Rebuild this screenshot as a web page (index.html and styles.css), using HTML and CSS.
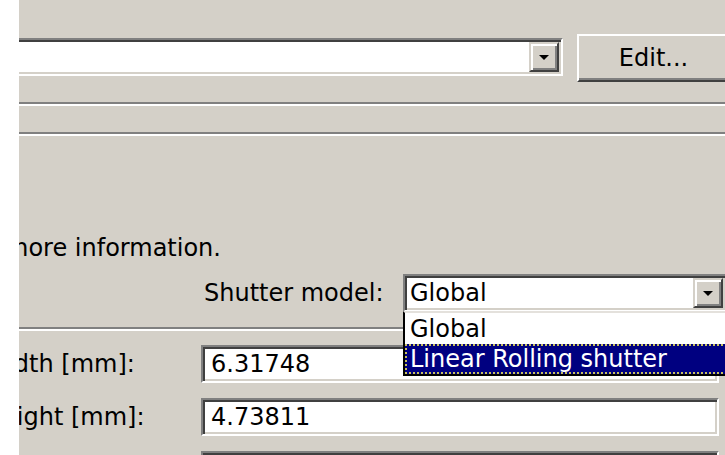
FILE: index.html
```html
<!DOCTYPE html>
<html lang="en">
<head>
<meta charset="utf-8">
<title>Camera settings</title>
<link rel="stylesheet" href="styles.css">
</head>
<body>
<div class="edge"></div>
<main class="dialog">
  <div class="content">
    <div class="top-row">
      <div class="combo combo-wide">
        <span class="value"></span>
        <span class="drop-btn"><svg width="10" height="6" viewBox="0 0 10 6"><path d="M0 0H10L5 5Z"/></svg></span>
      </div>
      <button class="push" type="button">Edit...</button>
    </div>
    <div class="groove groove-a"></div>
    <div class="groove groove-b"></div>
    <p class="note">more information.</p>
    <div class="shutter-row">
      <span class="shutter-label">Shutter model:</span>
      <div class="combo combo-shutter">
        <span class="value">Global</span>
        <span class="drop-btn"><svg width="10" height="6" viewBox="0 0 10 6"><path d="M0 0H10L5 5Z"/></svg></span>
      </div>
    </div>
    <div class="groove groove-c"></div>
    <div class="field-row first">
      <span class="label">Width [mm]:</span>
      <div class="textbox">6.31748</div>
    </div>
    <div class="field-row">
      <span class="label">Height [mm]:</span>
      <div class="textbox">4.73811</div>
    </div>
    <div class="field-row">
      <span class="label">Focal length [mm]:</span>
      <div class="textbox"></div>
    </div>
  </div>
  <ul class="dropdown">
    <li class="item">Global</li>
    <li class="item selected">Linear Rolling shutter</li>
  </ul>
</main>
</body>
</html>
```
FILE: styles.css
```css
html, body {
  margin: 0;
  padding: 0;
}

body {
  display: flex;
  height: 455px;
  overflow: hidden;
  font-family: "DejaVu Sans", sans-serif;
  font-size: 24px;
  color: #000;
  background: #fff;
}

.edge {
  flex: none;
  width: 19px;
  background: #fff;
}

.dialog {
  flex: 1;
  position: relative;
  overflow: hidden;
  background: #d4d0c8;
}

.content {
  margin-left: -35px;
  padding-top: 34px;
}

/* ---- combo box ---- */
.combo {
  box-sizing: border-box;
  display: flex;
  align-items: center;
  height: 38px;
  padding: 2px;
  background: #fff;
  border: 2px solid;
  border-color: #808080 #fff #fff #808080;
  box-shadow: inset 2px 2px 0 #404040, inset -2px -2px 0 #d4d0c8;
}

.combo .value {
  flex: 1;
  padding-left: 3px;
  line-height: 28px;
  white-space: nowrap;
}

.drop-btn {
  box-sizing: border-box;
  flex: none;
  display: flex;
  align-items: center;
  justify-content: center;
  width: 30px;
  height: 30px;
  padding-top: 2px;
  background: #d4d0c8;
  border: 2px solid;
  border-color: #d4d0c8 #404040 #404040 #d4d0c8;
  box-shadow: inset 2px 2px 0 #fff, inset -2px -2px 0 #808080;
}

.drop-btn svg {
  display: block;
  fill: #000;
}

.top-row {
  display: flex;
  align-items: flex-start;
}

.combo-wide {
  flex: none;
  width: 579px;
  margin-top: 4px;
}

.push {
  box-sizing: border-box;
  flex: none;
  width: 153px;
  height: 48px;
  margin-left: 14px;
  padding: 0;
  font: inherit;
  color: #000;
  background: #d4d0c8;
  border: 2px solid;
  border-color: #fff #404040 #404040 #fff;
  box-shadow: inset -2px -2px 0 #808080;
}

/* ---- etched separators ---- */
.groove {
  height: 2px;
  background: #808080;
  border-bottom: 2px solid #fff;
}

.groove-a { margin-top: 20px; }
.groove-b { margin-top: 26px; }
.groove-c { margin-top: 15px; }

.note {
  margin: 98px 0 0 21px;
  line-height: 28px;
  white-space: nowrap;
}

.shutter-row {
  display: flex;
  align-items: center;
  margin-top: 12px;
  padding-left: 220px;
}

.shutter-label {
  flex: none;
  width: 199px;
  line-height: 28px;
  white-space: nowrap;
}

.combo-shutter {
  flex: none;
  width: 324px;
}

/* ---- labelled text fields ---- */
.field-row {
  display: flex;
  align-items: center;
  margin-top: 15px;
}

.field-row.first {
  margin-top: 14px;
}

.label {
  flex: none;
  width: 217px;
  line-height: 28px;
  white-space: nowrap;
}

.textbox {
  box-sizing: border-box;
  flex: none;
  width: 518px;
  height: 38px;
  padding: 3px 6px 0 8px;
  line-height: 28px;
  background: #fff;
  border: 2px solid;
  border-color: #808080 #fff #fff #808080;
  box-shadow: inset 2px 2px 0 #404040, inset -2px -2px 0 #d4d0c8;
}

/* ---- open drop-down list ---- */
.dropdown {
  position: absolute;
  left: 384px;
  top: 311px;
  z-index: 2;
  box-sizing: border-box;
  width: 330px;
  margin: 0;
  padding: 1px 0 0;
  list-style: none;
  background: #fff;
  border: 2px solid #000;
  border-top-color: #e4e1dc;
}

.item {
  height: 30px;
  padding-left: 5px;
  line-height: 30px;
  white-space: nowrap;
}

.item.selected {
  color: #fff;
  background-color: #000080;
  background-image:
    repeating-linear-gradient(90deg, #c8c060 0 2px, transparent 2px 4px),
    repeating-linear-gradient(90deg, #c8c060 0 2px, transparent 2px 4px),
    repeating-linear-gradient(0deg, #c8c060 0 2px, transparent 2px 4px),
    repeating-linear-gradient(0deg, #c8c060 0 2px, transparent 2px 4px);
  background-size: 100% 2px, 100% 2px, 2px 100%, 2px 100%;
  background-position: top, bottom, left, right;
  background-repeat: no-repeat;
}
```
